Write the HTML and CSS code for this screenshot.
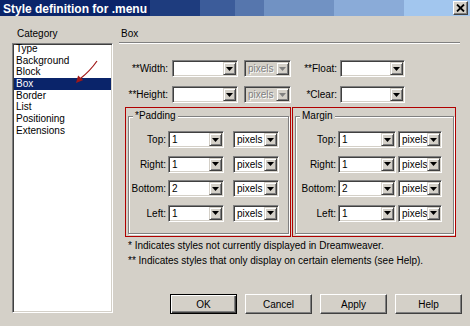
FILE: index.html
```html
<!DOCTYPE html>
<html>
<head>
<meta charset="utf-8">
<link rel="stylesheet" href="styles.css">
</head>
<body>
<div class="dialog">
  <div class="titlebar">
    <span class="title">Style definition for .menu</span>
    <span class="close"><svg width="9" height="8" viewBox="0 0 9 8"><path d="M1 0.5 L8 7.5 M8 0.5 L1 7.5" stroke="#000" stroke-width="1.8"/></svg></span>
  </div>
  <div class="body">
    <div class="cat-col">
      <div class="cat-label">Category</div>
      <ul class="cat-list">
        <li class="first">Type</li>
        <li>Background</li>
        <li>Block</li>
        <li class="sel">Box</li>
        <li>Border</li>
        <li>List</li>
        <li>Positioning</li>
        <li>Extensions</li>
      </ul>
      <svg class="arrow" width="50" height="35" viewBox="0 0 50 35">
        <path d="M47 6 Q40 16 31 23" fill="none" stroke="#a01818" stroke-width="1.2"/>
        <polygon points="26,28 33.3,25.1 28.1,20.5" fill="#a01818"/>
      </svg>
    </div>
    <div class="main-col">
      <div class="sec-head">Box</div>
      <div class="sep"></div>
      <div class="top-grid">
        <label class="lbl">**Width:</label>
        <div class="combo w66"><span class="val"></span><span class="dd"><svg width="7" height="4" viewBox="0 0 7 4"><polygon points="0,0 7,0 3.5,4" fill="#000"/></svg></span></div>
        <div class="combo w47 disabled"><span class="val">pixels</span><span class="dd"><svg width="7" height="4" viewBox="0 0 7 4"><polygon points="0,0 7,0 3.5,4" fill="#808080"/></svg></span></div>
        <label class="lbl lbl2">**Float:</label>
        <div class="combo w65"><span class="val"></span><span class="dd"><svg width="7" height="4" viewBox="0 0 7 4"><polygon points="0,0 7,0 3.5,4" fill="#000"/></svg></span></div>

        <label class="lbl">**Height:</label>
        <div class="combo w66"><span class="val"></span><span class="dd"><svg width="7" height="4" viewBox="0 0 7 4"><polygon points="0,0 7,0 3.5,4" fill="#000"/></svg></span></div>
        <div class="combo w47 disabled"><span class="val">pixels</span><span class="dd"><svg width="7" height="4" viewBox="0 0 7 4"><polygon points="0,0 7,0 3.5,4" fill="#808080"/></svg></span></div>
        <label class="lbl lbl2">*Clear:</label>
        <div class="combo w65"><span class="val"></span><span class="dd"><svg width="7" height="4" viewBox="0 0 7 4"><polygon points="0,0 7,0 3.5,4" fill="#000"/></svg></span></div>
      </div>

      <div class="groups">
        <div class="redbox pad-box">
          <fieldset class="grp">
            <legend>*Padding</legend>
            <div class="grp-rows pad-rows">
              <label class="lbl">Top:</label>
              <div class="combo"><span class="val">1</span><span class="dd"><svg width="7" height="4" viewBox="0 0 7 4"><polygon points="0,0 7,0 3.5,4" fill="#000"/></svg></span></div>
              <div class="combo"><span class="val">pixels</span><span class="dd"><svg width="7" height="4" viewBox="0 0 7 4"><polygon points="0,0 7,0 3.5,4" fill="#000"/></svg></span></div>
              <label class="lbl">Right:</label>
              <div class="combo"><span class="val">1</span><span class="dd"><svg width="7" height="4" viewBox="0 0 7 4"><polygon points="0,0 7,0 3.5,4" fill="#000"/></svg></span></div>
              <div class="combo"><span class="val">pixels</span><span class="dd"><svg width="7" height="4" viewBox="0 0 7 4"><polygon points="0,0 7,0 3.5,4" fill="#000"/></svg></span></div>
              <label class="lbl">Bottom:</label>
              <div class="combo"><span class="val">2</span><span class="dd"><svg width="7" height="4" viewBox="0 0 7 4"><polygon points="0,0 7,0 3.5,4" fill="#000"/></svg></span></div>
              <div class="combo"><span class="val">pixels</span><span class="dd"><svg width="7" height="4" viewBox="0 0 7 4"><polygon points="0,0 7,0 3.5,4" fill="#000"/></svg></span></div>
              <label class="lbl">Left:</label>
              <div class="combo"><span class="val">1</span><span class="dd"><svg width="7" height="4" viewBox="0 0 7 4"><polygon points="0,0 7,0 3.5,4" fill="#000"/></svg></span></div>
              <div class="combo"><span class="val">pixels</span><span class="dd"><svg width="7" height="4" viewBox="0 0 7 4"><polygon points="0,0 7,0 3.5,4" fill="#000"/></svg></span></div>
            </div>
          </fieldset>
        </div>
        <div class="redbox mar-box">
          <fieldset class="grp">
            <legend>Margin</legend>
            <div class="grp-rows mar-rows">
              <label class="lbl">Top:</label>
              <div class="combo"><span class="val">1</span><span class="dd"><svg width="7" height="4" viewBox="0 0 7 4"><polygon points="0,0 7,0 3.5,4" fill="#000"/></svg></span></div>
              <div class="combo"><span class="val">pixels</span><span class="dd"><svg width="7" height="4" viewBox="0 0 7 4"><polygon points="0,0 7,0 3.5,4" fill="#000"/></svg></span></div>
              <label class="lbl">Right:</label>
              <div class="combo"><span class="val">1</span><span class="dd"><svg width="7" height="4" viewBox="0 0 7 4"><polygon points="0,0 7,0 3.5,4" fill="#000"/></svg></span></div>
              <div class="combo"><span class="val">pixels</span><span class="dd"><svg width="7" height="4" viewBox="0 0 7 4"><polygon points="0,0 7,0 3.5,4" fill="#000"/></svg></span></div>
              <label class="lbl">Bottom:</label>
              <div class="combo"><span class="val">2</span><span class="dd"><svg width="7" height="4" viewBox="0 0 7 4"><polygon points="0,0 7,0 3.5,4" fill="#000"/></svg></span></div>
              <div class="combo"><span class="val">pixels</span><span class="dd"><svg width="7" height="4" viewBox="0 0 7 4"><polygon points="0,0 7,0 3.5,4" fill="#000"/></svg></span></div>
              <label class="lbl">Left:</label>
              <div class="combo"><span class="val">1</span><span class="dd"><svg width="7" height="4" viewBox="0 0 7 4"><polygon points="0,0 7,0 3.5,4" fill="#000"/></svg></span></div>
              <div class="combo"><span class="val">pixels</span><span class="dd"><svg width="7" height="4" viewBox="0 0 7 4"><polygon points="0,0 7,0 3.5,4" fill="#000"/></svg></span></div>
            </div>
          </fieldset>
        </div>
      </div>

      <div class="notes">
        <div>* Indicates styles not currently displayed in Dreamweaver.</div>
        <div>** Indicates styles that only display on certain elements (see Help).</div>
      </div>

      <div class="buttons">
        <button class="btn default">OK</button>
        <button class="btn">Cancel</button>
        <button class="btn">Apply</button>
        <button class="btn">Help</button>
      </div>
    </div>
  </div>
</div>
</body>
</html>
```
FILE: styles.css
```css
* { box-sizing: border-box; }
html, body { margin: 0; padding: 0; }
body {
  width: 470px;
  height: 326px;
  overflow: hidden;
  background: #d4d0c8;
  color: #000;
  font-family: "Liberation Sans", Arial, sans-serif;
  font-size: 10px;
}
.dialog {
  width: 470px;
  height: 326px;
  display: flex;
  flex-direction: column;
}
.titlebar {
  height: 16px;
  display: flex;
  justify-content: space-between;
  align-items: flex-start;
  background: linear-gradient(to right,
    #0a246a 0, #0a246a 150px,
    #1e3c7e 150px, #1e3c7e 200px,
    #3c5c9a 200px, #3c5c9a 235px,
    #5676ad 235px, #5676ad 264px,
    #7192c3 264px, #7192c3 334px,
    #8aabd8 334px, #8aabd8 404px,
    #a2c6ee 404px, #a2c6ee 470px);
}
.title {
  color: #fff;
  font-weight: bold;
  font-size: 12px;
  line-height: 16px;
  padding: 1px 0 0 3px;
  white-space: nowrap;
}
.close {
  width: 15px;
  height: 14px;
  margin: 1px 2px 0 0;
  background: #d4d0c8;
  border: 1px solid;
  border-color: #fff #404040 #404040 #fff;
  box-shadow: inset -1px -1px #808080;
  display: flex;
  align-items: center;
  justify-content: center;
}
.body {
  display: flex;
  flex: 1;
}
.cat-col {
  position: relative;
  width: 101px;
  margin-left: 12px;
  padding-top: 12px;
}
.cat-label {
  height: 12px;
  line-height: 12px;
  padding-left: 5px;
  margin-bottom: 3px;
}
.cat-list {
  list-style: none;
  margin: 0;
  padding: 0;
  height: 270px;
  background: #fff;
  border: 1px solid;
  border-color: #808080 #fff #fff #808080;
  box-shadow: inset 1px 1px #404040, inset -1px -1px #d4d0c8;
  overflow: hidden;
  padding: 1px;
}
.cat-list li {
  line-height: 11.7px;
  height: 11.7px;
  padding-left: 2px;
  white-space: nowrap;
}
.cat-list li.first { margin-top: -2px; }
.cat-list li.sel {
  background: #0a246a;
  color: #fff;
}
.arrow {
  position: absolute;
  left: 38px;
  top: 39px;
}
.main-col {
  width: 343px;
  margin-left: 6px;
  padding-top: 12px;
}
.sec-head {
  height: 12px;
  line-height: 12px;
  padding-left: 2px;
}
.sep {
  margin-top: 2px;
  margin-right: 2px;
  height: 2px;
  border-top: 1px solid #808080;
  border-bottom: 1px solid #fff;
}
.top-grid {
  margin-top: 16px;
  display: grid;
  grid-template-columns: 53px 72px 47px 49px 65px;
  grid-auto-rows: 17px;
  row-gap: 9px;
}
.lbl {
  text-align: right;
  line-height: 17px;
  padding-right: 4px;
  white-space: nowrap;
}
.lbl2 { padding-right: 3px; }
.combo {
  height: 17px;
  display: flex;
  justify-content: space-between;
  align-items: stretch;
  background: #fff;
  border: 1px solid;
  border-color: #808080 #fff #fff #808080;
  box-shadow: inset 1px 1px #404040, inset -1px -1px #d4d0c8;
  padding: 1px;
}
.combo.w66 { width: 66px; }
.combo.w47 { width: 47px; }
.combo.w65 { width: 65px; }
.combo.disabled { background: #d4d0c8; color: #808080; }
.combo.disabled .val { text-shadow: 1px 1px 0 #fff; }
.val {
  padding-left: 2px;
  line-height: 13px;
  white-space: nowrap;
  overflow: hidden;
}
.dd {
  flex: none;
  width: 13px;
  height: 13px;
  background: #d4d0c8;
  border: 1px solid;
  border-color: #d4d0c8 #404040 #404040 #d4d0c8;
  box-shadow: inset 1px 1px #fff, inset -1px -1px #808080;
  display: flex;
  align-items: center;
  justify-content: center;
}
.dd svg { display: block; }
.groups {
  margin-top: 4px;
  margin-left: 6px;
  display: flex;
  gap: 1px;
}
.redbox {
  height: 130px;
  border: 1px solid #b00000;
  padding: 2px 1px 2px 2px;
}
.pad-box { width: 166px; }
.mar-box { width: 164px; }
.grp {
  margin: 0;
  padding: 0;
  min-width: 0;
  height: 100%;
  border: 1px solid #808080;
  box-shadow: inset 1px 1px #fff, 1px 1px #fff;
}
.grp legend {
  margin-left: 4px;
  padding: 0 2px;
  line-height: 12px;
  background: #d4d0c8;
}
.grp-rows {
  margin-top: 9px;
  display: grid;
  grid-auto-rows: 17px;
  row-gap: 7.5px;
}
.pad-rows { grid-template-columns: 39px 65px 46px; }
.pad-rows .combo:nth-of-type(odd) { }
.pad-rows .lbl, .mar-rows .lbl { padding-right: 2px; }
.pad-rows > .combo:nth-child(3n+2) { width: 56px; }
.pad-rows > .combo:nth-child(3n) { width: 46px; }
.mar-rows { grid-template-columns: 42px 60px 44px; }
.mar-rows > .combo:nth-child(3n+2) { width: 58px; }
.mar-rows > .combo:nth-child(3n) { width: 44px; }
.notes {
  margin-top: 1px;
  padding-left: 9px;
  line-height: 15px;
  white-space: nowrap;
}
.buttons {
  margin-top: 26px;
  display: flex;
  justify-content: flex-end;
  gap: 8px;
}
.btn {
  width: 67px;
  height: 20px;
  padding: 0;
  margin: 0;
  font-family: "Liberation Sans", Arial, sans-serif;
  font-size: 10px;
  color: #000;
  background: #d4d0c8;
  border: 1px solid;
  border-color: #fff #404040 #404040 #fff;
  box-shadow: inset -1px -1px #808080;
}
.btn.default {
  border: 1px solid #000;
  box-shadow: inset 1px 1px #fff, inset -1px -1px #404040, inset -2px -2px #808080;
}
```
